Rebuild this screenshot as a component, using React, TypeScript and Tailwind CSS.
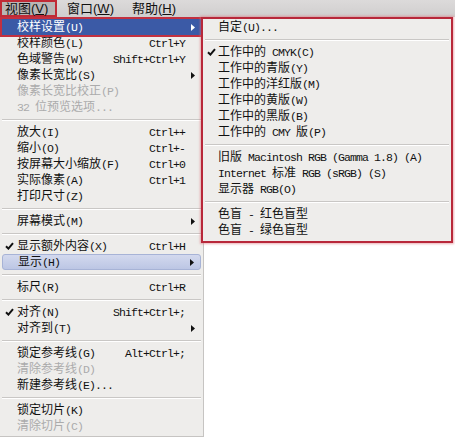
import type { ReactNode } from "react";

type Item =
  | { sep: true }
  | {
      sep?: false;
      label: string;
      shortcut?: string;
      arrow?: boolean;
      checked?: boolean;
      disabled?: boolean;
      state?: "active" | "hover";
    };

const VIEW_MENU: Item[] = [
  { label: "校样设置(U)", arrow: true, state: "active" },
  { label: "校样颜色(L)", shortcut: "Ctrl+Y" },
  { label: "色域警告(W)", shortcut: "Shift+Ctrl+Y" },
  { label: "像素长宽比(S)", arrow: true },
  { label: "像素长宽比校正(P)", disabled: true },
  { label: "32 位预览选项...", disabled: true },
  { sep: true },
  { label: "放大(I)", shortcut: "Ctrl++" },
  { label: "缩小(O)", shortcut: "Ctrl+-" },
  { label: "按屏幕大小缩放(F)", shortcut: "Ctrl+0" },
  { label: "实际像素(A)", shortcut: "Ctrl+1" },
  { label: "打印尺寸(Z)" },
  { sep: true },
  { label: "屏幕模式(M)", arrow: true },
  { sep: true },
  { label: "显示额外内容(X)", shortcut: "Ctrl+H", checked: true },
  { label: "显示(H)", arrow: true, state: "hover" },
  { sep: true },
  { label: "标尺(R)", shortcut: "Ctrl+R" },
  { sep: true },
  { label: "对齐(N)", shortcut: "Shift+Ctrl+;", checked: true },
  { label: "对齐到(T)", arrow: true },
  { sep: true },
  { label: "锁定参考线(G)", shortcut: "Alt+Ctrl+;" },
  { label: "清除参考线(D)", disabled: true },
  { label: "新建参考线(E)..." },
  { sep: true },
  { label: "锁定切片(K)" },
  { label: "清除切片(C)", disabled: true },
];

const PROOF_MENU: Item[] = [
  { label: "自定(U)..." },
  { sep: true },
  { label: "工作中的 CMYK(C)", checked: true },
  { label: "工作中的青版(Y)" },
  { label: "工作中的洋红版(M)" },
  { label: "工作中的黄版(W)" },
  { label: "工作中的黑版(B)" },
  { label: "工作中的 CMY 版(P)" },
  { sep: true },
  { label: "旧版 Macintosh RGB (Gamma 1.8) (A)" },
  { label: "Internet 标准 RGB (sRGB) (S)" },
  { label: "显示器 RGB(O)" },
  { sep: true },
  { label: "色盲 - 红色盲型" },
  { label: "色盲 - 绿色盲型" },
];

// latin runs get the narrow mono face, CJK stays on the base font
function Txt({ s }: { s: string }) {
  const parts = s.split(/([\x20-\x7e]+)/).filter(Boolean);
  return (
    <>
      {parts.map((p, i) =>
        /^[\x20-\x7e]+$/.test(p) ? (
          <span
            key={i}
            className="whitespace-pre font-['Liberation_Mono',monospace] text-[11.5px] tracking-[-0.9px]"
          >
            {p}
          </span>
        ) : (
          <span key={i}>{p}</span>
        )
      )}
    </>
  );
}

function Check() {
  return (
    <svg width="9" height="8" viewBox="0 0 9 8">
      <path d="M1 4.2 L3.4 6.6 L8 1.2" fill="none" stroke="#111" strokeWidth="2" />
    </svg>
  );
}

function Arrow({ white = false }: { white?: boolean }) {
  return (
    <svg width="4" height="7" viewBox="0 0 4 7">
      <polygon points="0,0 4,3.5 0,7" fill={white ? "#fff" : "#111"} />
    </svg>
  );
}

function Separator() {
  return (
    <div className="mx-[2px] mb-[3px] mt-[4px]">
      <div className="h-px bg-[#c9c7c5]" />
      <div className="h-px bg-white" />
    </div>
  );
}

function Row({ item, children }: { item: Extract<Item, { label: string }>; children?: ReactNode }) {
  const active = item.state === "active";
  const hover = item.state === "hover";
  return (
    <div
      className={`mx-[2px] flex h-4 items-center leading-4 ${
        active
          ? "bg-[#3b5aa6] text-white outline-2 outline-[#c23040]"
          : hover
          ? "rounded-[3px] border border-[#a7b3d6] bg-gradient-to-b from-[#d3d9ee] to-[#bcc6e4] text-[#111]"
          : item.disabled
          ? "text-[#ababab]"
          : "text-[#111]"
      }`}
    >
      {children}
    </div>
  );
}

function MenuBar() {
  return (
    <div className="flex h-[17px] items-center bg-gradient-to-b from-[#dcdada] to-[#d0cece] font-['Liberation_Sans','Noto_Sans_CJK_SC',sans-serif] text-[13px] text-[#111]">
      <div className="flex h-[17px] w-[57px] items-center border-2 border-[#c02a36] bg-[#b9b5b5] pl-[3px]">
        视图(<span className="underline">V</span>)
      </div>
      <div className="ml-[10px] w-[65px]">
        窗口(<span className="underline">W</span>)
      </div>
      <div>
        帮助(<span className="underline">H</span>)
      </div>
    </div>
  );
}

function ViewMenu() {
  return (
    <div className="w-[204px] shrink-0 border-b border-r border-[#c6c4c2] bg-[#eeedeb] pb-[2px] pt-[2px]">
      {VIEW_MENU.map((item, i) =>
        item.sep ? (
          <Separator key={i} />
        ) : (
          <Row key={i} item={item}>
            <span className="flex w-[15px] justify-center">
              {item.checked && <Check />}
            </span>
            <span className="flex-1 whitespace-nowrap">
              <Txt s={item.label} />
            </span>
            {item.shortcut && (
              <span className="whitespace-nowrap">
                <Txt s={item.shortcut} />
              </span>
            )}
            <span className="flex w-[16px] pl-[6px]">
              {item.arrow && <Arrow white={item.state === "active"} />}
            </span>
          </Row>
        )
      )}
    </div>
  );
}

function ProofMenu() {
  return (
    <div className="relative z-10 -ml-[3px] w-[252px] shrink-0 border-2 border-[#b8283a] bg-[#eeedeb] pb-[3px] shadow-[0_0_2px_1px_rgba(220,110,120,0.55)]">
      {PROOF_MENU.map((item, i) =>
        item.sep ? (
          <Separator key={i} />
        ) : (
          <Row key={i} item={item}>
            <span className="flex w-[13px] justify-center">
              {item.checked && <Check />}
            </span>
            <span className="whitespace-nowrap">
              <Txt s={item.label} />
            </span>
          </Row>
        )
      )}
    </div>
  );
}

export default function App() {
  return (
    <div className="h-[438px] w-[455px] overflow-hidden bg-white font-['Noto_Sans_CJK_SC',sans-serif] text-[12px]">
      <MenuBar />
      <div className="flex items-start">
        <ViewMenu />
        <ProofMenu />
      </div>
    </div>
  );
}
